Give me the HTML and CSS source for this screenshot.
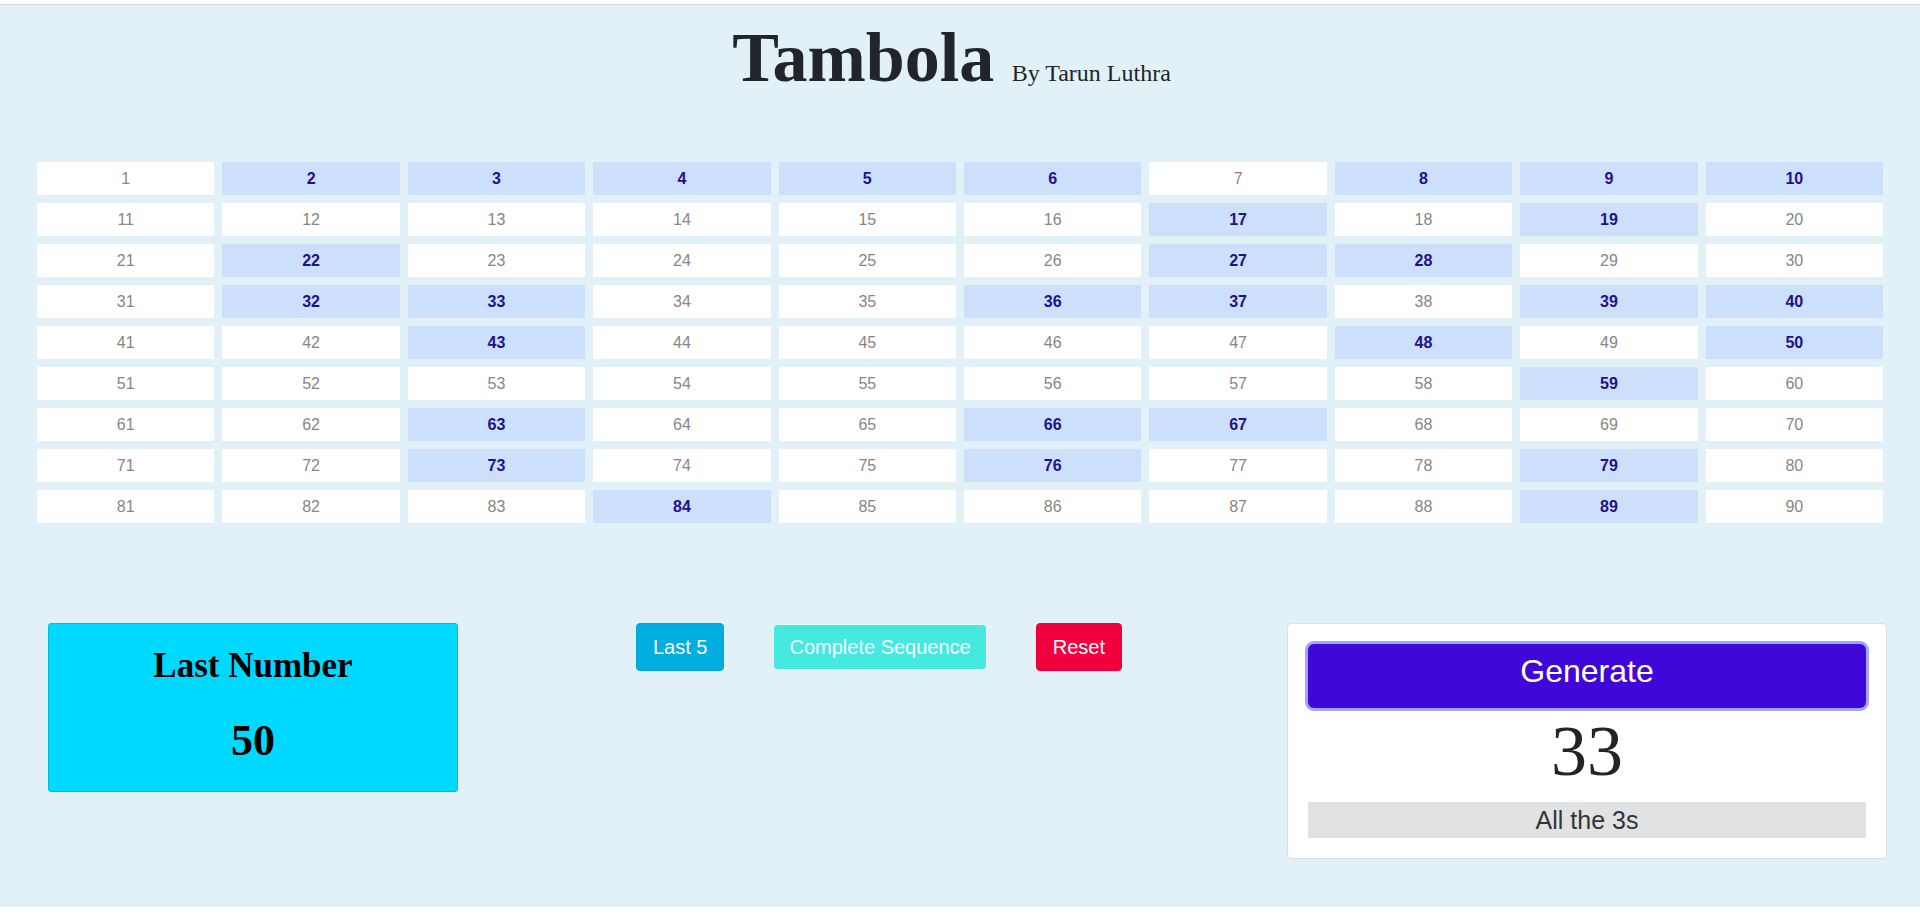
FILE: index.html
```html
<!DOCTYPE html>
<html>
<head>
<meta charset="utf-8">
<title>Tambola</title>
<link rel="stylesheet" href="styles.css">
</head>
<body>
<div class="page">
  <header class="header">
    <h1 class="title">Tambola <small class="byline">By Tarun Luthra</small></h1>
  </header>
  <div class="board" id="board">
    <div class="cell">1</div><div class="cell on">2</div><div class="cell on">3</div><div class="cell on">4</div><div class="cell on">5</div><div class="cell on">6</div><div class="cell">7</div><div class="cell on">8</div><div class="cell on">9</div><div class="cell on">10</div>
    <div class="cell">11</div><div class="cell">12</div><div class="cell">13</div><div class="cell">14</div><div class="cell">15</div><div class="cell">16</div><div class="cell on">17</div><div class="cell">18</div><div class="cell on">19</div><div class="cell">20</div>
    <div class="cell">21</div><div class="cell on">22</div><div class="cell">23</div><div class="cell">24</div><div class="cell">25</div><div class="cell">26</div><div class="cell on">27</div><div class="cell on">28</div><div class="cell">29</div><div class="cell">30</div>
    <div class="cell">31</div><div class="cell on">32</div><div class="cell on">33</div><div class="cell">34</div><div class="cell">35</div><div class="cell on">36</div><div class="cell on">37</div><div class="cell">38</div><div class="cell on">39</div><div class="cell on">40</div>
    <div class="cell">41</div><div class="cell">42</div><div class="cell on">43</div><div class="cell">44</div><div class="cell">45</div><div class="cell">46</div><div class="cell">47</div><div class="cell on">48</div><div class="cell">49</div><div class="cell on">50</div>
    <div class="cell">51</div><div class="cell">52</div><div class="cell">53</div><div class="cell">54</div><div class="cell">55</div><div class="cell">56</div><div class="cell">57</div><div class="cell">58</div><div class="cell on">59</div><div class="cell">60</div>
    <div class="cell">61</div><div class="cell">62</div><div class="cell on">63</div><div class="cell">64</div><div class="cell">65</div><div class="cell on">66</div><div class="cell on">67</div><div class="cell">68</div><div class="cell">69</div><div class="cell">70</div>
    <div class="cell">71</div><div class="cell">72</div><div class="cell on">73</div><div class="cell">74</div><div class="cell">75</div><div class="cell on">76</div><div class="cell">77</div><div class="cell">78</div><div class="cell on">79</div><div class="cell">80</div>
    <div class="cell">81</div><div class="cell">82</div><div class="cell">83</div><div class="cell on">84</div><div class="cell">85</div><div class="cell">86</div><div class="cell">87</div><div class="cell">88</div><div class="cell on">89</div><div class="cell">90</div>
  </div>
  <div class="bottom">
    <div class="last-box">
      <h2 class="last-title">Last Number</h2>
      <div class="last-value">50</div>
    </div>
    <div class="actions">
      <button class="btn btn-last">Last 5</button>
      <button class="btn btn-seq">Complete Sequence</button>
      <button class="btn btn-reset">Reset</button>
    </div>
    <div class="card">
      <button class="btn-generate">Generate</button>
      <div class="current">33</div>
      <div class="phrase">All the 3s</div>
    </div>
  </div>
</div>
</body>
</html>
```

FILE: styles.css
```css
html, body {
  margin: 0;
  padding: 0;
  background: #ffffff;
}

body {
  font-family: "Liberation Serif", "Times New Roman", serif;
  color: #212529;
}

.page {
  margin-top: 4px;
  border-top: 1px solid #d9d9de;
  background: #e2f1f7;
  height: 903px;
  box-sizing: border-box;
}

.header {
  text-align: center;
  padding-top: 10px;
  padding-right: 17px;
}

.title {
  margin: 0;
  font-family: "Liberation Serif", "Times New Roman", serif;
  font-weight: 700;
  font-size: 70px;
  line-height: 86px;
  color: #212529;
}

.byline {
  font-size: 24px;
  font-weight: 400;
  line-height: 1;
  color: #212529;
}

.board {
  display: grid;
  grid-template-columns: repeat(10, 1fr);
  gap: 8px;
  margin: 61px 37px 0 37px;
}

.cell {
  height: 33px;
  line-height: 33px;
  background: #ffffff;
  text-align: center;
  font-family: "Liberation Sans", Arial, sans-serif;
  font-size: 16px;
  color: #868686;
}

.cell.on {
  background: #cce0fc;
  color: #22108c;
  font-weight: 700;
}

.bottom {
  display: flex;
  align-items: flex-start;
  margin-top: 100px;
  padding: 0 33px 0 48px;
}

.last-box {
  width: 410px;
  box-sizing: border-box;
  background: #00d9ff;
  border: 1px solid #00bcdc;
  border-radius: 3px;
  padding: 21px 0 23px;
  text-align: center;
  color: #000;
}

.last-title {
  margin: 0;
  font-size: 35px;
  font-weight: 700;
  line-height: 42px;
}

.last-value {
  margin-top: 28px;
  font-size: 44px;
  font-weight: 700;
  line-height: 1.2;
}

.actions {
  display: flex;
  align-items: flex-start;
  gap: 49px;
  margin-left: 178px;
}

.btn {
  font-family: "Liberation Sans", Arial, sans-serif;
  font-size: 20px;
  line-height: 1.5;
  padding: 8px 16px;
  border: 1px solid transparent;
  border-radius: 4px;
  color: #ffffff;
  cursor: pointer;
}

.btn-last {
  background: #00aee0;
  border-color: #00a6d6;
}

.btn-seq {
  background: #45e9e0;
  border-color: #e9fbfa;
  color: #f4fffe;
  padding: 7px 15px;
  margin-top: 1px;
}

.btn-reset {
  background: #f0003e;
  border-color: #ea003c;
}

.card {
  margin-left: auto;
  width: 600px;
  box-sizing: border-box;
  background: #ffffff;
  border: 1px solid #dcdfe2;
  border-radius: 4px;
  padding: 20px;
  text-align: center;
}

.btn-generate {
  display: block;
  width: 100%;
  font-family: "Liberation Sans", Arial, sans-serif;
  font-size: 32px;
  line-height: 48px;
  padding: 3px 16px 13px;
  border: none;
  border-radius: 6px;
  background: #4008d8;
  color: #ffffff;
  box-shadow: 0 0 0 3px #a3a3f7;
}

.current {
  font-family: "Liberation Serif", "Times New Roman", serif;
  font-size: 72px;
  line-height: 1.2;
  color: #212529;
  margin-bottom: 8px;
}

.phrase {
  background: #e1e2e4;
  font-family: "Liberation Sans", Arial, sans-serif;
  font-size: 25px;
  line-height: 36px;
  color: #343434;
}
```
